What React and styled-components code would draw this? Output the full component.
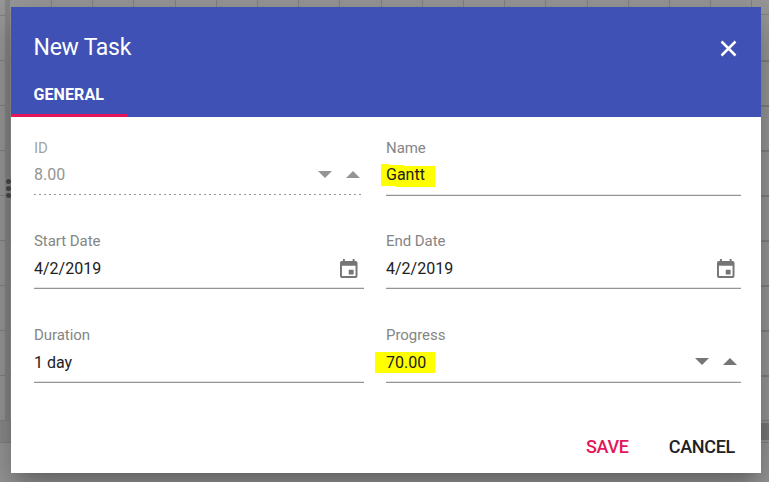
import React from "react";
import styled, { createGlobalStyle, css } from "styled-components";

const GlobalStyle = createGlobalStyle`
  * { box-sizing: border-box; }
  html, body { margin: 0; overflow: hidden; }
  body { font-family: Roboto, "Liberation Sans", sans-serif; }
`;

const Backdrop = styled.div`
  position: relative;
  display: flex;
  width: 769px;
  height: 482px;
  padding: 7px 8px 9px 11px;
  overflow: hidden;
  background:
    linear-gradient(#7c7c7c, #7c7c7c) 761px 423px / 8px 17px no-repeat,
    linear-gradient(#8d8d8d, #8d8d8d) 0 421px / 11px 21px no-repeat,
    linear-gradient(#838383, #838383) 0 442px / 100% 1px no-repeat,
    linear-gradient(#999, #999) 0 443px / 100% 39px no-repeat,
    linear-gradient(#878787, #878787) 5px 0 / 5px 442px no-repeat,
    repeating-linear-gradient(#838383 0 1px, transparent 1px 45px) 0 15px / 11px 406px no-repeat,
    repeating-linear-gradient(#838383 0 2px, transparent 2px 45px) 761px 60px / 8px 361px no-repeat,
    linear-gradient(#838383, #838383) 761px 14px / 8px 1px no-repeat,
    repeating-linear-gradient(90deg, #848484 0 1px, transparent 1px 41.200px) 51px 0 / 100% 14px no-repeat,
    #999;
`;

const SplitHandle = styled.div`
  position: absolute;
  left: 5px;
  top: 177px;
  display: flex;
  flex-direction: column;
  gap: 2px;
  width: 7px;
  height: 23px;
  padding: 2px 0 0 1px;
  background: #8b8b8b;
`;

const HandleDot = styled.span`
  width: 5px;
  height: 5px;
  flex: none;
  border-radius: 50%;
  background: #4b4b4b;
`;

const Dialog = styled.section`
  position: relative;
  display: flex;
  flex-direction: column;
  flex: 1;
  background: #fff;
  box-shadow: 0 11px 15px -7px rgba(0, 0, 0, 0.2), 0 24px 38px 3px rgba(0, 0, 0, 0.14),
    0 9px 46px 8px rgba(0, 0, 0, 0.12);
`;

const Header = styled.header`
  display: flex;
  flex-direction: column;
  height: 110px;
  background: #3f51b5;
  color: #fff;
`;

const TitleBar = styled.div`
  display: flex;
  align-items: center;
  justify-content: space-between;
  height: 66px;
  padding: 15px 24px 0 22.500px;
`;

const Title = styled.h1`
  margin: 0;
  font-size: 23px;
  font-weight: 400;
  line-height: 30px;
  letter-spacing: -0.25px;
`;

const IconButton = styled.button`
  display: flex;
  padding: 2px 0 0;
  border: 0;
  background: none;
  color: inherit;
`;

const Tab = styled.button`
  width: 116px;
  height: 44px;
  padding: 2px 0 0 22.500px;
  border: 0;
  border-bottom: 3px solid #e3165b;
  background: none;
  color: #fff;
  font: 700 16px/39px Roboto, sans-serif;
  letter-spacing: 0.1px;
  text-align: left;
`;

const Form = styled.form`
  display: grid;
  grid-template-columns: 330px 355px;
  grid-template-rows: 93px 94px 94px;
  column-gap: 22px;
  padding: 21px 20px 0 23px;
`;

const Field = styled.div`
  display: flex;
  flex-direction: column;
  color: ${(p) => (p.$disabled ? "#949494" : "#212121")};
`;

const Label = styled.label`
  height: 20px;
  color: ${(p) => (p.$disabled ? "#a3a3a3" : "#858585")};
  font-size: 15px;
  line-height: 20px;
  letter-spacing: -0.05px;
`;

const ValueRow = styled.div`
  display: flex;
  align-items: center;
  justify-content: space-between;
  ${(p) =>
    p.$disabled
      ? css`
          width: 328px;
          height: 37px;
          padding-bottom: 4px;
          background: repeating-linear-gradient(90deg, #949494 0 2px, transparent 2px 5px) 0 100% / 100% 1px no-repeat;
        `
      : css`
          height: 38px;
          padding-bottom: ${p.$raised ? 3 : 1}px;
          border-bottom: 1px solid #949494;
          box-shadow: inset 0 -1px #e4e4e4;
        `}
`;

const Value = styled.span`
  position: relative;
  z-index: 0;
  font-size: 16px;
  line-height: 22px;
`;

const Marker = styled.span`
  position: absolute;
  z-index: -1;
  background: #ff0;
  ${(p) =>
    p.$kind === "name"
      ? css`
          left: -5px;
          top: 0;
          width: 54px;
          height: 23px;
          clip-path: polygon(0 0, 9px 0, 9px 1px, 23px 1px, 23px 2px, 54px 2px, 54px 23px, 15px 23px, 15px 22px, 0 22px);
        `
      : css`
          left: -11px;
          top: 0;
          width: 60px;
          height: 21px;
        `}
`;

const Tools = styled.span`
  display: flex;
  gap: ${(p) => (p.$disabled ? 13.5 : 14)}px;
  padding-right: ${(p) => p.$inset}px;
  padding-bottom: ${(p) => p.$lift || 0}px;
  color: ${(p) => (p.$disabled ? "#949494" : "#757575")};
`;

const Footer = styled.footer`
  display: flex;
  justify-content: flex-end;
  gap: 40px;
  margin-top: auto;
  padding: 0 26px 14px 0;
`;

const Action = styled.button`
  padding: 0;
  border: 0;
  background: none;
  color: ${(p) => (p.$primary ? "#e3165b" : "#212121")};
  font: 500 18px/24px Roboto, sans-serif;
  letter-spacing: -0.3px;
`;

const CloseIcon = () => (
  <svg width="17" height="17" viewBox="0 0 17 17" stroke="currentColor" strokeWidth="2.5">
    <path d="M1.5 1.5 15.5 15.5M15.5 1.5 1.5 15.5" />
  </svg>
);

const CalendarIcon = () => (
  <svg width="17.500" height="19.500" viewBox="0 0 18 20" fill="currentColor" preserveAspectRatio="none">
    <path
      fillRule="evenodd"
      d="M3 0h2v2h8V0h2v2h1a2 2 0 0 1 2 2v13.500a2 2 0 0 1-2 2H2a2 2 0 0 1-2-2V4a2 2 0 0 1 2-2h1ZM2 7v10.500h14V7ZM9 11h5v5H9Z"
    />
  </svg>
);

const Arrow = ({ up }) => (
  <svg width="14" height="7" viewBox="0 0 14 7" fill="currentColor">
    <path d={up ? "M0 7 7 0l7 7Z" : "M0 0h14L7 7Z"} />
  </svg>
);

const fields = [
  { label: "ID", value: "8.00", kind: "number", disabled: true, inset: 2.5 },
  { label: "Name", value: "Gantt", marker: "name", raised: true },
  { label: "Start Date", value: "4/2/2019", kind: "date", inset: 6.5, lift: 0.5 },
  { label: "End Date", value: "4/2/2019", kind: "date", inset: 6.5, lift: 0.5 },
  { label: "Duration", value: "1 day" },
  { label: "Progress", value: "70.00", kind: "number", marker: "progress", inset: 4, lift: 3 },
];

export default function App() {
  return (
    <>
      <GlobalStyle />
      <Backdrop>
        <SplitHandle>
          <HandleDot />
          <HandleDot />
          <HandleDot />
        </SplitHandle>
        <Dialog>
          <Header>
            <TitleBar>
              <Title>New Task</Title>
              <IconButton aria-label="Close">
                <CloseIcon />
              </IconButton>
            </TitleBar>
            <Tab>GENERAL</Tab>
          </Header>
          <Form>
            {fields.map((f) => (
              <Field key={f.label} $disabled={f.disabled}>
                <Label $disabled={f.disabled}>{f.label}</Label>
                <ValueRow $disabled={f.disabled} $raised={f.raised}>
                  <Value>
                    {f.marker && <Marker $kind={f.marker} />}
                    {f.value}
                  </Value>
                  {f.kind && (
                    <Tools $inset={f.inset} $lift={f.lift} $disabled={f.disabled}>
                      {f.kind === "date" ? (
                        <CalendarIcon />
                      ) : (
                        <>
                          <Arrow />
                          <Arrow up />
                        </>
                      )}
                    </Tools>
                  )}
                </ValueRow>
              </Field>
            ))}
          </Form>
          <Footer>
            <Action $primary>SAVE</Action>
            <Action>CANCEL</Action>
          </Footer>
        </Dialog>
      </Backdrop>
    </>
  );
}
